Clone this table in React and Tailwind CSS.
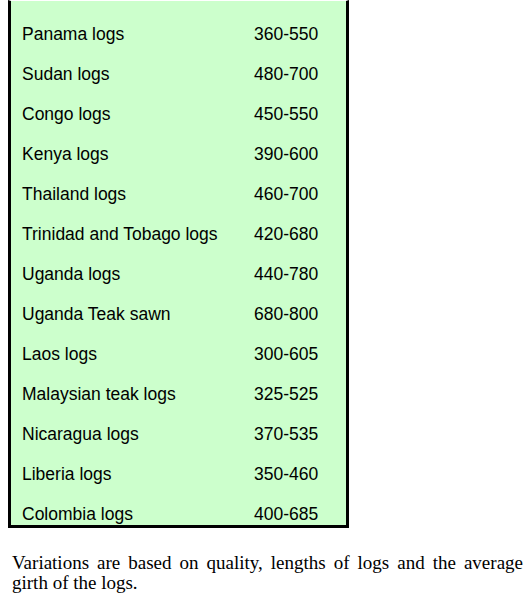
import React from "react";

const rows = [
  ["Panama logs", "360-550"],
  ["Sudan logs", "480-700"],
  ["Congo logs", "450-550"],
  ["Kenya logs", "390-600"],
  ["Thailand logs", "460-700"],
  ["Trinidad and Tobago logs", "420-680"],
  ["Uganda logs", "440-780"],
  ["Uganda Teak sawn", "680-800"],
  ["Laos logs", "300-605"],
  ["Malaysian teak logs", "325-525"],
  ["Nicaragua logs", "370-535"],
  ["Liberia logs", "350-460"],
  ["Colombia logs", "400-685"],
];

export default function App() {
  return (
    <div className="w-[529px] h-[597px] bg-white overflow-hidden">
      <div className="ml-[8px] w-[341px] h-[528px] border-l-[3px] border-r-[3px] border-b-[3px] border-black border-t border-t-white bg-[#ccffcc] overflow-hidden">
        <div
          className="pt-[13px] pl-[11px] text-[17.5px] leading-[40px] text-black"
          style={{ fontFamily: '"Liberation Sans", Arial, sans-serif' }}
        >
          {rows.map(([name, range]) => (
            <div key={name} className="flex h-[40px] whitespace-nowrap">
              <div className="w-[232px]">{name}</div>
              <div>{range}</div>
            </div>
          ))}
        </div>
      </div>
      <p
        className="mt-[25px] ml-[12px] w-[511px] text-[19px] leading-[20px] text-black text-justify"
        style={{ fontFamily: '"Liberation Serif", "Times New Roman", serif' }}
      >
        Variations are based on quality, lengths of logs and the average girth of the logs.
      </p>
    </div>
  );
}
